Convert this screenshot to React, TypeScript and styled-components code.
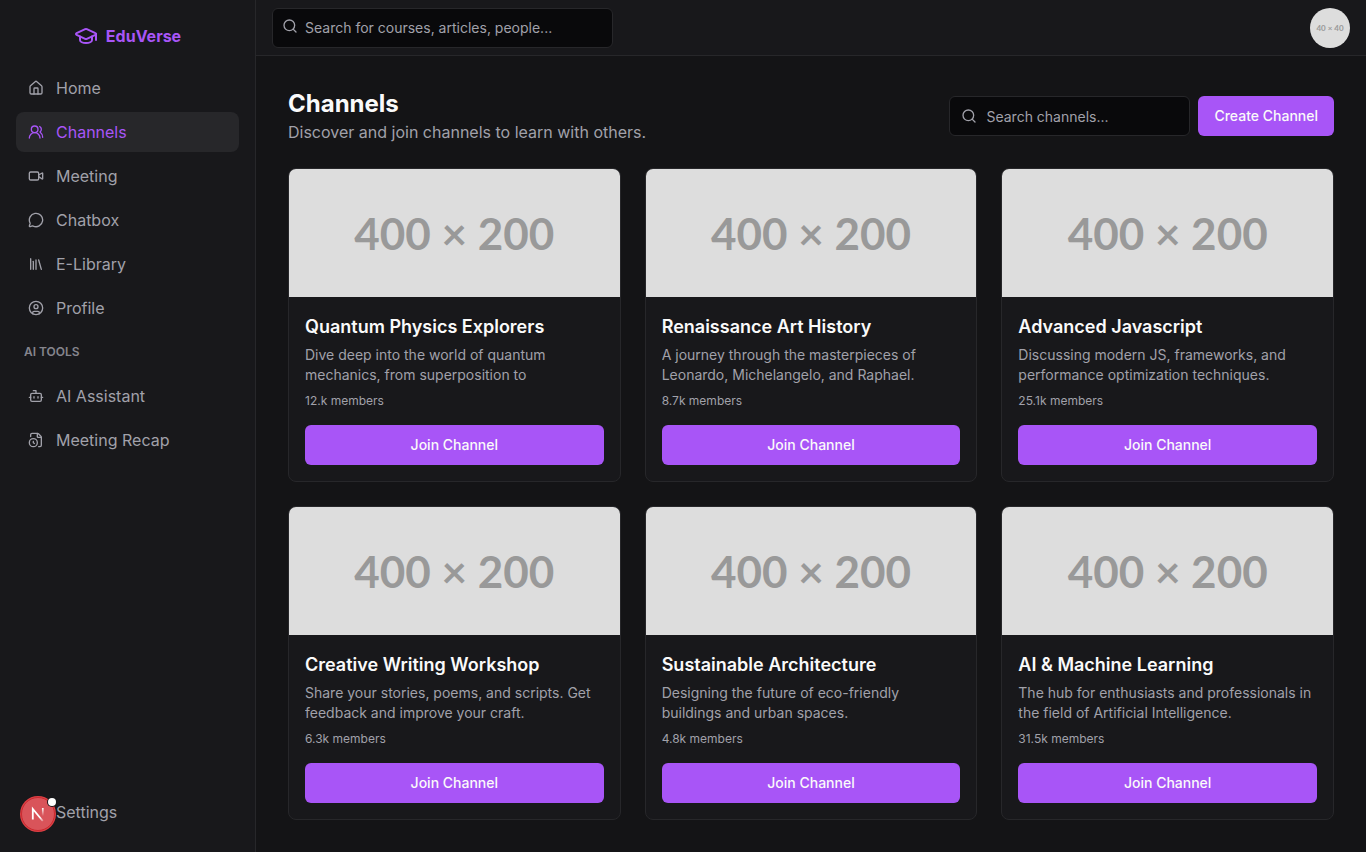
import React from "react";
import styled, { createGlobalStyle } from "styled-components";
import {
  Bot,
  CircleUser,
  FileClock,
  GraduationCap,
  House,
  Library,
  MessageCircle,
  Search,
  Settings,
  UsersRound,
  Video,
  type LucideIcon,
} from "lucide-react";

const color = {
  page: "#09090b",
  content: "#141416",
  panel: "#18181b",
  line: "#27272a",
  muted: "#a1a1aa",
  text: "#fafafa",
  primary: "#a855f7",
};

const GlobalStyle = createGlobalStyle`
  *, *::before, *::after { box-sizing: border-box; }
  body {
    margin: 0;
    background: ${color.content};
    color: ${color.text};
    font-family: Inter, "Liberation Sans", sans-serif;
    font-size: 16px;
    line-height: 24px;
  }
  h1, h2, p, ul { margin: 0; padding: 0; }
  ul { list-style: none; }
  button, input { font: inherit; }
`;

const Shell = styled.div`
  display: grid;
  grid-template-columns: 256px minmax(0, 1fr);
  min-height: 100vh;
`;

const Sidebar = styled.aside`
  position: sticky;
  top: 0;
  display: flex;
  flex-direction: column;
  height: 100vh;
  padding: 16px 16px 20px;
  background: ${color.panel};
  border-right: 1px solid ${color.line};
`;

const Brand = styled.a`
  display: flex;
  align-items: center;
  justify-content: center;
  gap: 8px;
  height: 40px;
  margin-bottom: 12px;
  color: ${color.primary};
  font-weight: 700;
  text-decoration: none;
`;

const NavList = styled.ul`
  display: flex;
  flex-direction: column;
  gap: 4px;
`;

const NavLink = styled.a<{ $active?: boolean }>`
  display: flex;
  align-items: center;
  gap: 12px;
  height: 40px;
  padding: 0 12px;
  border-radius: 8px;
  color: ${(p) => (p.$active ? color.primary : color.muted)};
  background: ${(p) => (p.$active ? color.line : "transparent")};
  text-decoration: none;
`;

const NavHeading = styled.h2`
  padding: 16px 8px;
  color: ${color.muted};
  opacity: 0.8;
  font-size: 12px;
  line-height: 16px;
  font-weight: 600;
`;

const SidebarFooter = styled.div`
  position: relative;
  margin-top: auto;
`;

const DevBadge = styled.button`
  position: absolute;
  left: 4px;
  top: 4px;
  width: 36px;
  height: 36px;
  padding: 0;
  border: 0;
  background: none;

  svg {
    display: block;
    overflow: visible;
  }
`;

const Column = styled.div`
  display: flex;
  flex-direction: column;
`;

const TopBar = styled.header`
  display: flex;
  align-items: center;
  gap: 16px;
  height: 56px;
  padding: 0 16px;
  background: ${color.panel};
  border-bottom: 1px solid ${color.line};
`;

const TopSearch = styled.form`
  flex: 1;
`;

const Field = styled.label<{ $width: string; $inset: number; $indent: number }>`
  position: relative;
  display: block;
  width: ${(p) => p.$width};

  svg {
    position: absolute;
    left: ${(p) => p.$inset}px;
    top: ${(p) => p.$inset}px;
    color: ${color.muted};
  }

  input {
    display: block;
    width: 100%;
    height: 40px;
    padding: 8px 12px 8px ${(p) => p.$indent}px;
    border: 1px solid ${color.line};
    border-radius: 6px;
    background: ${color.page};
    color: ${color.text};
    font-size: 14px;
    line-height: 20px;
  }

  input::placeholder {
    color: ${color.muted};
    opacity: 1;
  }
`;

const Avatar = styled.button`
  display: flex;
  align-items: center;
  justify-content: center;
  width: 40px;
  height: 40px;
  padding: 0;
  border: 0;
  border-radius: 50%;
  background: #dddddd;
  color: #999999;
  font-family: Lato, sans-serif;
  font-size: 8px;
  line-height: 16px;
  font-weight: 700;
`;

const Main = styled.main`
  display: flex;
  flex-direction: column;
  gap: 24px;
  padding: 32px;
`;

const PageHead = styled.div`
  display: flex;
  align-items: center;
  justify-content: space-between;
  gap: 16px;
`;

const Title = styled.h1`
  font-size: 24px;
  line-height: 32px;
  font-weight: 700;
`;

const Subtitle = styled.p`
  color: ${color.muted};
`;

const Actions = styled.div`
  display: flex;
  gap: 8px;
`;

const Button = styled.button`
  height: 40px;
  padding: 0 16px;
  border: 0;
  border-radius: 6px;
  background: ${color.primary};
  color: ${color.text};
  font-size: 14px;
  line-height: 20px;
  font-weight: 500;
  white-space: nowrap;
`;

const Grid = styled.div`
  display: grid;
  grid-template-columns: repeat(3, minmax(0, 1fr));
  gap: 24px;
`;

const Card = styled.article`
  overflow: hidden;
  border: 1px solid ${color.line};
  border-radius: 8px;
  background: ${color.panel};
`;

const Cover = styled.div`
  display: flex;
  align-items: center;
  justify-content: center;
  height: 128px;
  background: #dddddd;
  color: #999999;
  font-family: Lato, sans-serif;
  font-size: 44px;
  line-height: 48px;
  font-weight: 700;
`;

const CardBody = styled.div`
  display: flex;
  flex-direction: column;
  padding: 16px;
`;

const CardTitle = styled.h2`
  font-size: 18px;
  line-height: 28px;
  font-weight: 600;
`;

const Description = styled.p`
  display: -webkit-box;
  -webkit-box-orient: vertical;
  -webkit-line-clamp: 2;
  overflow: hidden;
  height: 40px;
  margin-top: 4px;
  color: ${color.muted};
  font-size: 14px;
  line-height: 20px;
`;

const Members = styled.p`
  margin: 8px 0 16px;
  color: ${color.muted};
  font-size: 12px;
  line-height: 16px;
`;

type NavEntry = { label: string; icon: LucideIcon; active?: boolean };

const mainNav: NavEntry[] = [
  { label: "Home", icon: House },
  { label: "Channels", icon: UsersRound, active: true },
  { label: "Meeting", icon: Video },
  { label: "Chatbox", icon: MessageCircle },
  { label: "E-Library", icon: Library },
  { label: "Profile", icon: CircleUser },
];

const toolNav: NavEntry[] = [
  { label: "AI Assistant", icon: Bot },
  { label: "Meeting Recap", icon: FileClock },
];

const channels = [
  {
    name: "Quantum Physics Explorers",
    about: "Dive deep into the world of quantum mechanics, from superposition to",
    members: "12.k",
  },
  {
    name: "Renaissance Art History",
    about: "A journey through the masterpieces of Leonardo, Michelangelo, and Raphael.",
    members: "8.7k",
  },
  {
    name: "Advanced Javascript",
    about: "Discussing modern JS, frameworks, and performance optimization techniques.",
    members: "25.1k",
  },
  {
    name: "Creative Writing Workshop",
    about: "Share your stories, poems, and scripts. Get feedback and improve your craft.",
    members: "6.3k",
  },
  {
    name: "Sustainable Architecture",
    about: "Designing the future of eco-friendly buildings and urban spaces.",
    members: "4.8k",
  },
  {
    name: "AI & Machine Learning",
    about: "The hub for enthusiasts and professionals in the field of Artificial Intelligence.",
    members: "31.5k",
  },
];

function Nav({ items }: { items: NavEntry[] }) {
  return (
    <NavList>
      {items.map(({ label, icon: Icon, active }) => (
        <li key={label}>
          <NavLink href="#" $active={active} aria-current={active ? "page" : undefined}>
            <Icon size={16} />
            {label}
          </NavLink>
        </li>
      ))}
    </NavList>
  );
}

function NextBadge() {
  return (
    <DevBadge type="button" aria-label="Open developer tools">
      <svg width="36" height="36" viewBox="0 0 36 36" fill="none">
        <defs>
          <linearGradient id="fadeDown" x1="15" y1="15" x2="24" y2="25" gradientUnits="userSpaceOnUse">
            <stop offset="0.6" stopColor="#fff" />
            <stop offset="1" stopColor="#fff" stopOpacity="0.2" />
          </linearGradient>
          <linearGradient id="fadeUp" x1="22" y1="12" x2="22" y2="20" gradientUnits="userSpaceOnUse">
            <stop stopColor="#fff" />
            <stop offset="1" stopColor="#fff" stopOpacity="0" />
          </linearGradient>
        </defs>
        <circle cx="18" cy="18" r="18" fill="#dc4045" />
        <circle cx="18" cy="18" r="16.5" fill="#d9545a" stroke="#ca2a30" />
        <path d="M12.8 23.6V13L22.8 25" stroke="url(#fadeDown)" strokeWidth="1.8" />
        <path d="M22.8 12v8.4" stroke="url(#fadeUp)" strokeWidth="1.7" />
        <circle cx="32" cy="6" r="5" fill="#18181b" />
        <circle cx="32" cy="6" r="4" fill="#fff" />
      </svg>
    </DevBadge>
  );
}

export default function App() {
  return (
    <>
      <GlobalStyle />
      <Shell>
        <Sidebar>
          <Brand href="#">
            <GraduationCap size={24} />
            EduVerse
          </Brand>
          <nav>
            <Nav items={mainNav} />
            <NavHeading>AI TOOLS</NavHeading>
            <Nav items={toolNav} />
          </nav>
          <SidebarFooter>
            <NavLink href="#">
              <Settings size={16} />
              Settings
            </NavLink>
            <NextBadge />
          </SidebarFooter>
        </Sidebar>
        <Column>
          <TopBar>
            <TopSearch role="search">
              <Field $width="calc(100% / 3)" $inset={10} $indent={32}>
                <Search size={16} />
                <input
                  type="search"
                  aria-label="Search for courses, articles, people"
                  placeholder="Search for courses, articles, people..."
                />
              </Field>
            </TopSearch>
            <Avatar type="button">40 × 40</Avatar>
          </TopBar>
          <Main>
            <PageHead>
              <div>
                <Title>Channels</Title>
                <Subtitle>Discover and join channels to learn with others.</Subtitle>
              </div>
              <Actions>
                <Field $width="241px" $inset={12} $indent={36}>
                  <Search size={16} />
                  <input type="search" aria-label="Search channels" placeholder="Search channels..." />
                </Field>
                <Button type="button">Create Channel</Button>
              </Actions>
            </PageHead>
            <Grid>
              {channels.map((channel) => (
                <Card key={channel.name}>
                  <Cover>400 × 200</Cover>
                  <CardBody>
                    <CardTitle>{channel.name}</CardTitle>
                    <Description>{channel.about}</Description>
                    <Members>{channel.members} members</Members>
                    <Button type="button">Join Channel</Button>
                  </CardBody>
                </Card>
              ))}
            </Grid>
          </Main>
        </Column>
      </Shell>
    </>
  );
}
